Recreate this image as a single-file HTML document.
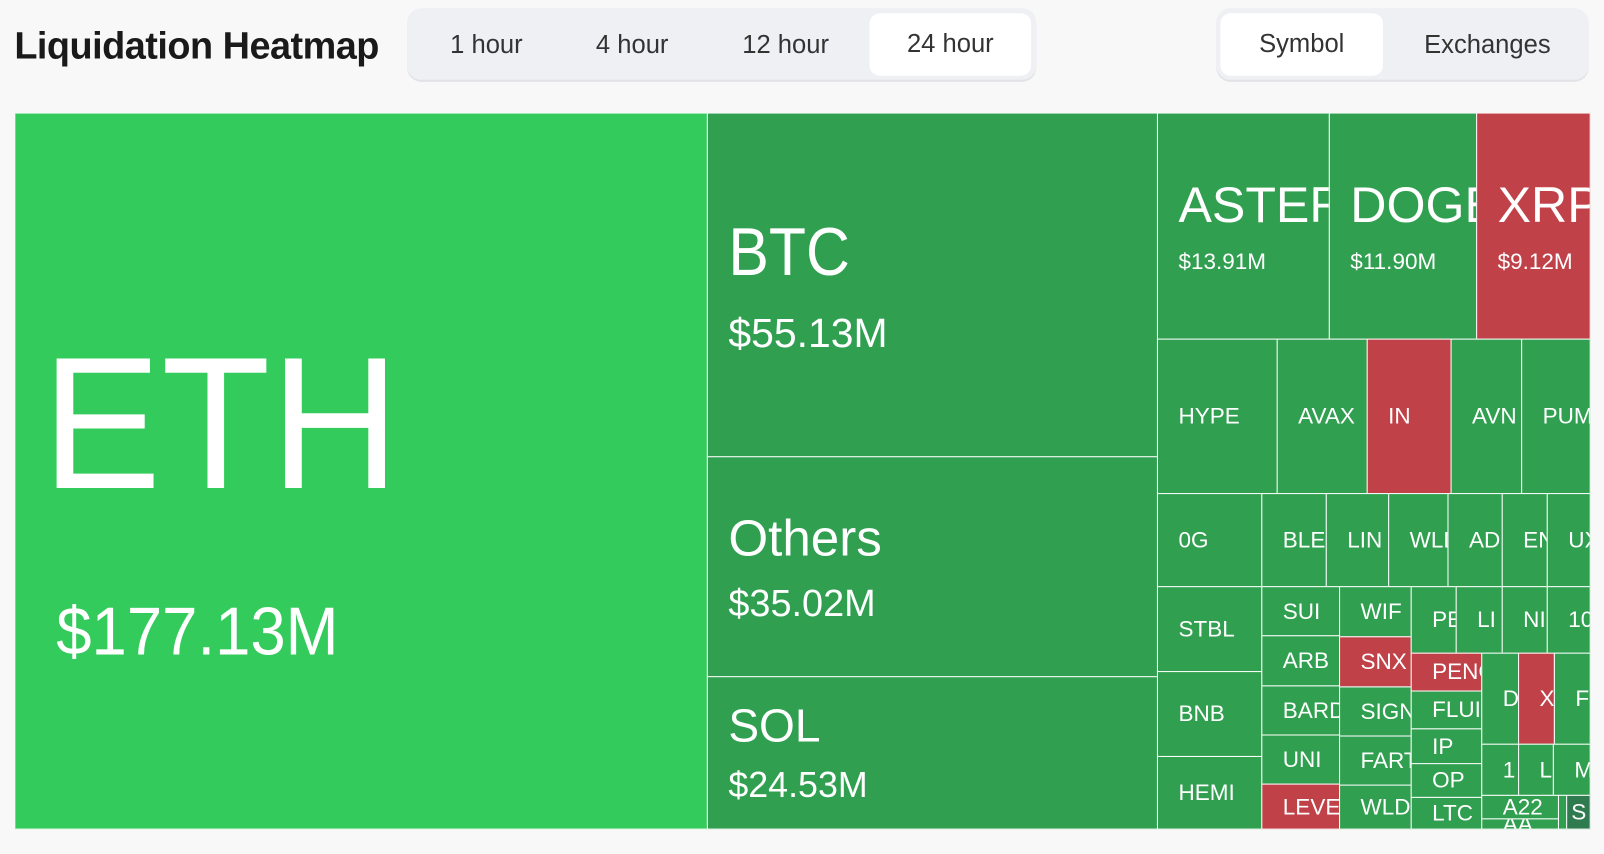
<!DOCTYPE html>
<html><head><meta charset="utf-8"><style>
html,body{margin:0;padding:0;background:#f8f8f8;width:1604px;height:854px;overflow:hidden}
#w{position:absolute;left:0;top:0;width:1568px;height:835px;transform:scale(1.02296);transform-origin:0 0;font-family:"Liberation Sans",sans-serif}
.t{position:absolute;left:14px;top:24px;font-size:37px;font-weight:bold;letter-spacing:-0.5px;color:#1a1a1a}
.seg{position:absolute;top:8px;height:70px;background:#eff0f4;border-radius:14px;box-shadow:0 2px 0 #e2e3e7}
.seg span{position:absolute;top:6px;height:61px;line-height:61px;font-size:25px;color:#333;text-align:center}
.seg .a{background:#fff;border-radius:10px;top:5px}
.c{position:absolute;box-sizing:border-box;border:1px solid #fff;background:#30a050;color:#fff;overflow:hidden;white-space:nowrap;display:flex;flex-direction:column;justify-content:center;padding-left:20px;font-size:22px}
.r{background:#c04148}
.v{font-size:22px;margin-top:14px}
</style></head><body><div id="w">
<div class="t">Liquidation Heatmap</div>
<div class="seg" style="left:398px;width:615px">
<span style="left:20px;width:115px">1 hour</span>
<span style="left:160px;width:120px">4 hour</span>
<span style="left:305px;width:130px">12 hour</span>
<span class="a" style="left:452px;width:158px">24 hour</span>
</div>
<div class="seg" style="left:1189px;width:364px">
<span class="a" style="left:4px;width:159px">Symbol</span>
<span style="left:175px;width:180px">Exchanges</span>
</div>

<div class="c" style="left:15px;top:110px;width:677px;height:701px;background:#33cc5c;border-left:0;display:block">
<div style="position:absolute;left:26px;top:210px;font-size:184px;line-height:184px;transform:scaleX(0.95);transform-origin:0 0">ETH</div>
<div style="position:absolute;left:40px;top:466px;font-size:66px;line-height:80px;transform:scaleX(0.94);transform-origin:0 0">$177.13M</div>
</div>
<div class="c" style="left:691px;top:110px;width:441px;height:337px"><div style="font-size:66px;transform:scaleX(0.9);transform-origin:0 0">BTC</div><div style="font-size:40px;margin-top:20px">$55.13M</div></div>
<div class="c" style="left:691px;top:446px;width:441px;height:216px"><div style="font-size:50px">Others</div><div style="font-size:37px;margin-top:14px">$35.02M</div></div>
<div class="c" style="left:691px;top:661px;width:441px;height:150px"><div style="font-size:45px">SOL</div><div style="font-size:35px;margin-top:12px">$24.53M</div></div>

<div class="c" style="left:1131px;top:110px;width:169px;height:222px"><div style="font-size:49px">ASTER</div><div class="v">$13.91M</div></div>
<div class="c" style="left:1299px;top:110px;width:145px;height:222px"><div style="font-size:49px">DOGE</div><div class="v">$11.90M</div></div>
<div class="c r" style="left:1443px;top:110px;width:112px;height:222px"><div style="font-size:49px">XRP</div><div class="v">$9.12M</div></div>

<div class="c" style="left:1131px;top:331px;width:118px;height:152px">HYPE</div>
<div class="c" style="left:1248px;top:331px;width:89px;height:152px">AVAX</div>
<div class="c r" style="left:1336px;top:331px;width:83px;height:152px">IN</div>
<div class="c" style="left:1418px;top:331px;width:70px;height:152px">AVN</div>
<div class="c" style="left:1487px;top:331px;width:68px;height:152px">PUM</div>

<div class="c" style="left:1131px;top:482px;width:103px;height:92px">0G</div>
<div class="c" style="left:1233px;top:482px;width:64px;height:92px">BLE</div>
<div class="c" style="left:1296px;top:482px;width:62px;height:92px">LIN</div>
<div class="c" style="left:1357px;top:482px;width:59px;height:92px">WLD</div>
<div class="c" style="left:1415px;top:482px;width:54px;height:92px">AD</div>
<div class="c" style="left:1468px;top:482px;width:45px;height:92px">EN</div>
<div class="c" style="left:1512px;top:482px;width:43px;height:92px">UX</div>

<div class="c" style="left:1131px;top:573px;width:103px;height:84px">STBL</div>
<div class="c" style="left:1131px;top:656px;width:103px;height:84px">BNB</div>
<div class="c" style="left:1131px;top:739px;width:103px;height:72px">HEMI</div>

<div class="c" style="left:1233px;top:573px;width:77px;height:49px">SUI</div>
<div class="c" style="left:1233px;top:621px;width:77px;height:50px">ARB</div>
<div class="c" style="left:1233px;top:670px;width:77px;height:49px">BARD</div>
<div class="c" style="left:1233px;top:718px;width:77px;height:49px">UNI</div>
<div class="c r" style="left:1233px;top:766px;width:77px;height:45px">LEVE</div>

<div class="c" style="left:1309px;top:573px;width:71px;height:50px">WIF</div>
<div class="c r" style="left:1309px;top:622px;width:71px;height:50px">SNX</div>
<div class="c" style="left:1309px;top:671px;width:71px;height:49px">SIGN</div>
<div class="c" style="left:1309px;top:719px;width:71px;height:49px">FART</div>
<div class="c" style="left:1309px;top:767px;width:71px;height:44px">WLD</div>

<div class="c" style="left:1379px;top:573px;width:45px;height:66px">PE</div>
<div class="c" style="left:1423px;top:573px;width:46px;height:66px">LI</div>
<div class="c" style="left:1468px;top:573px;width:45px;height:66px">NI</div>
<div class="c" style="left:1512px;top:573px;width:43px;height:66px">10</div>

<div class="c r" style="left:1379px;top:638px;width:70px;height:38px">PENG</div>
<div class="c" style="left:1379px;top:675px;width:70px;height:38px">FLUI</div>
<div class="c" style="left:1379px;top:712px;width:70px;height:35px">IP</div>
<div class="c" style="left:1379px;top:746px;width:70px;height:34px">OP</div>
<div class="c" style="left:1379px;top:779px;width:70px;height:32px">LTC</div>

<div class="c" style="left:1448px;top:638px;width:37px;height:90px;padding-left:20px">D</div>
<div class="c r" style="left:1484px;top:638px;width:36px;height:90px;padding-left:20px">X</div>
<div class="c" style="left:1519px;top:638px;width:36px;height:90px;padding-left:20px">F</div>
<div class="c" style="left:1448px;top:727px;width:37px;height:51px;padding-left:20px">1</div>
<div class="c" style="left:1484px;top:727px;width:35px;height:51px;padding-left:20px">L</div>
<div class="c" style="left:1518px;top:727px;width:37px;height:51px;padding-left:20px">M</div>
<div class="c" style="left:1448px;top:777px;width:76px;height:24px;padding-left:20px">A22</div>
<div class="c" style="left:1448px;top:800px;width:76px;height:11px;padding-left:20px">AA</div>
<div class="c" style="left:1523px;top:777px;width:9px;height:34px;padding-left:2px"></div>
<div class="c" style="left:1531px;top:777px;width:24px;height:34px;background:#2f7a4f;padding-left:4px">S</div>
</div></body></html>
